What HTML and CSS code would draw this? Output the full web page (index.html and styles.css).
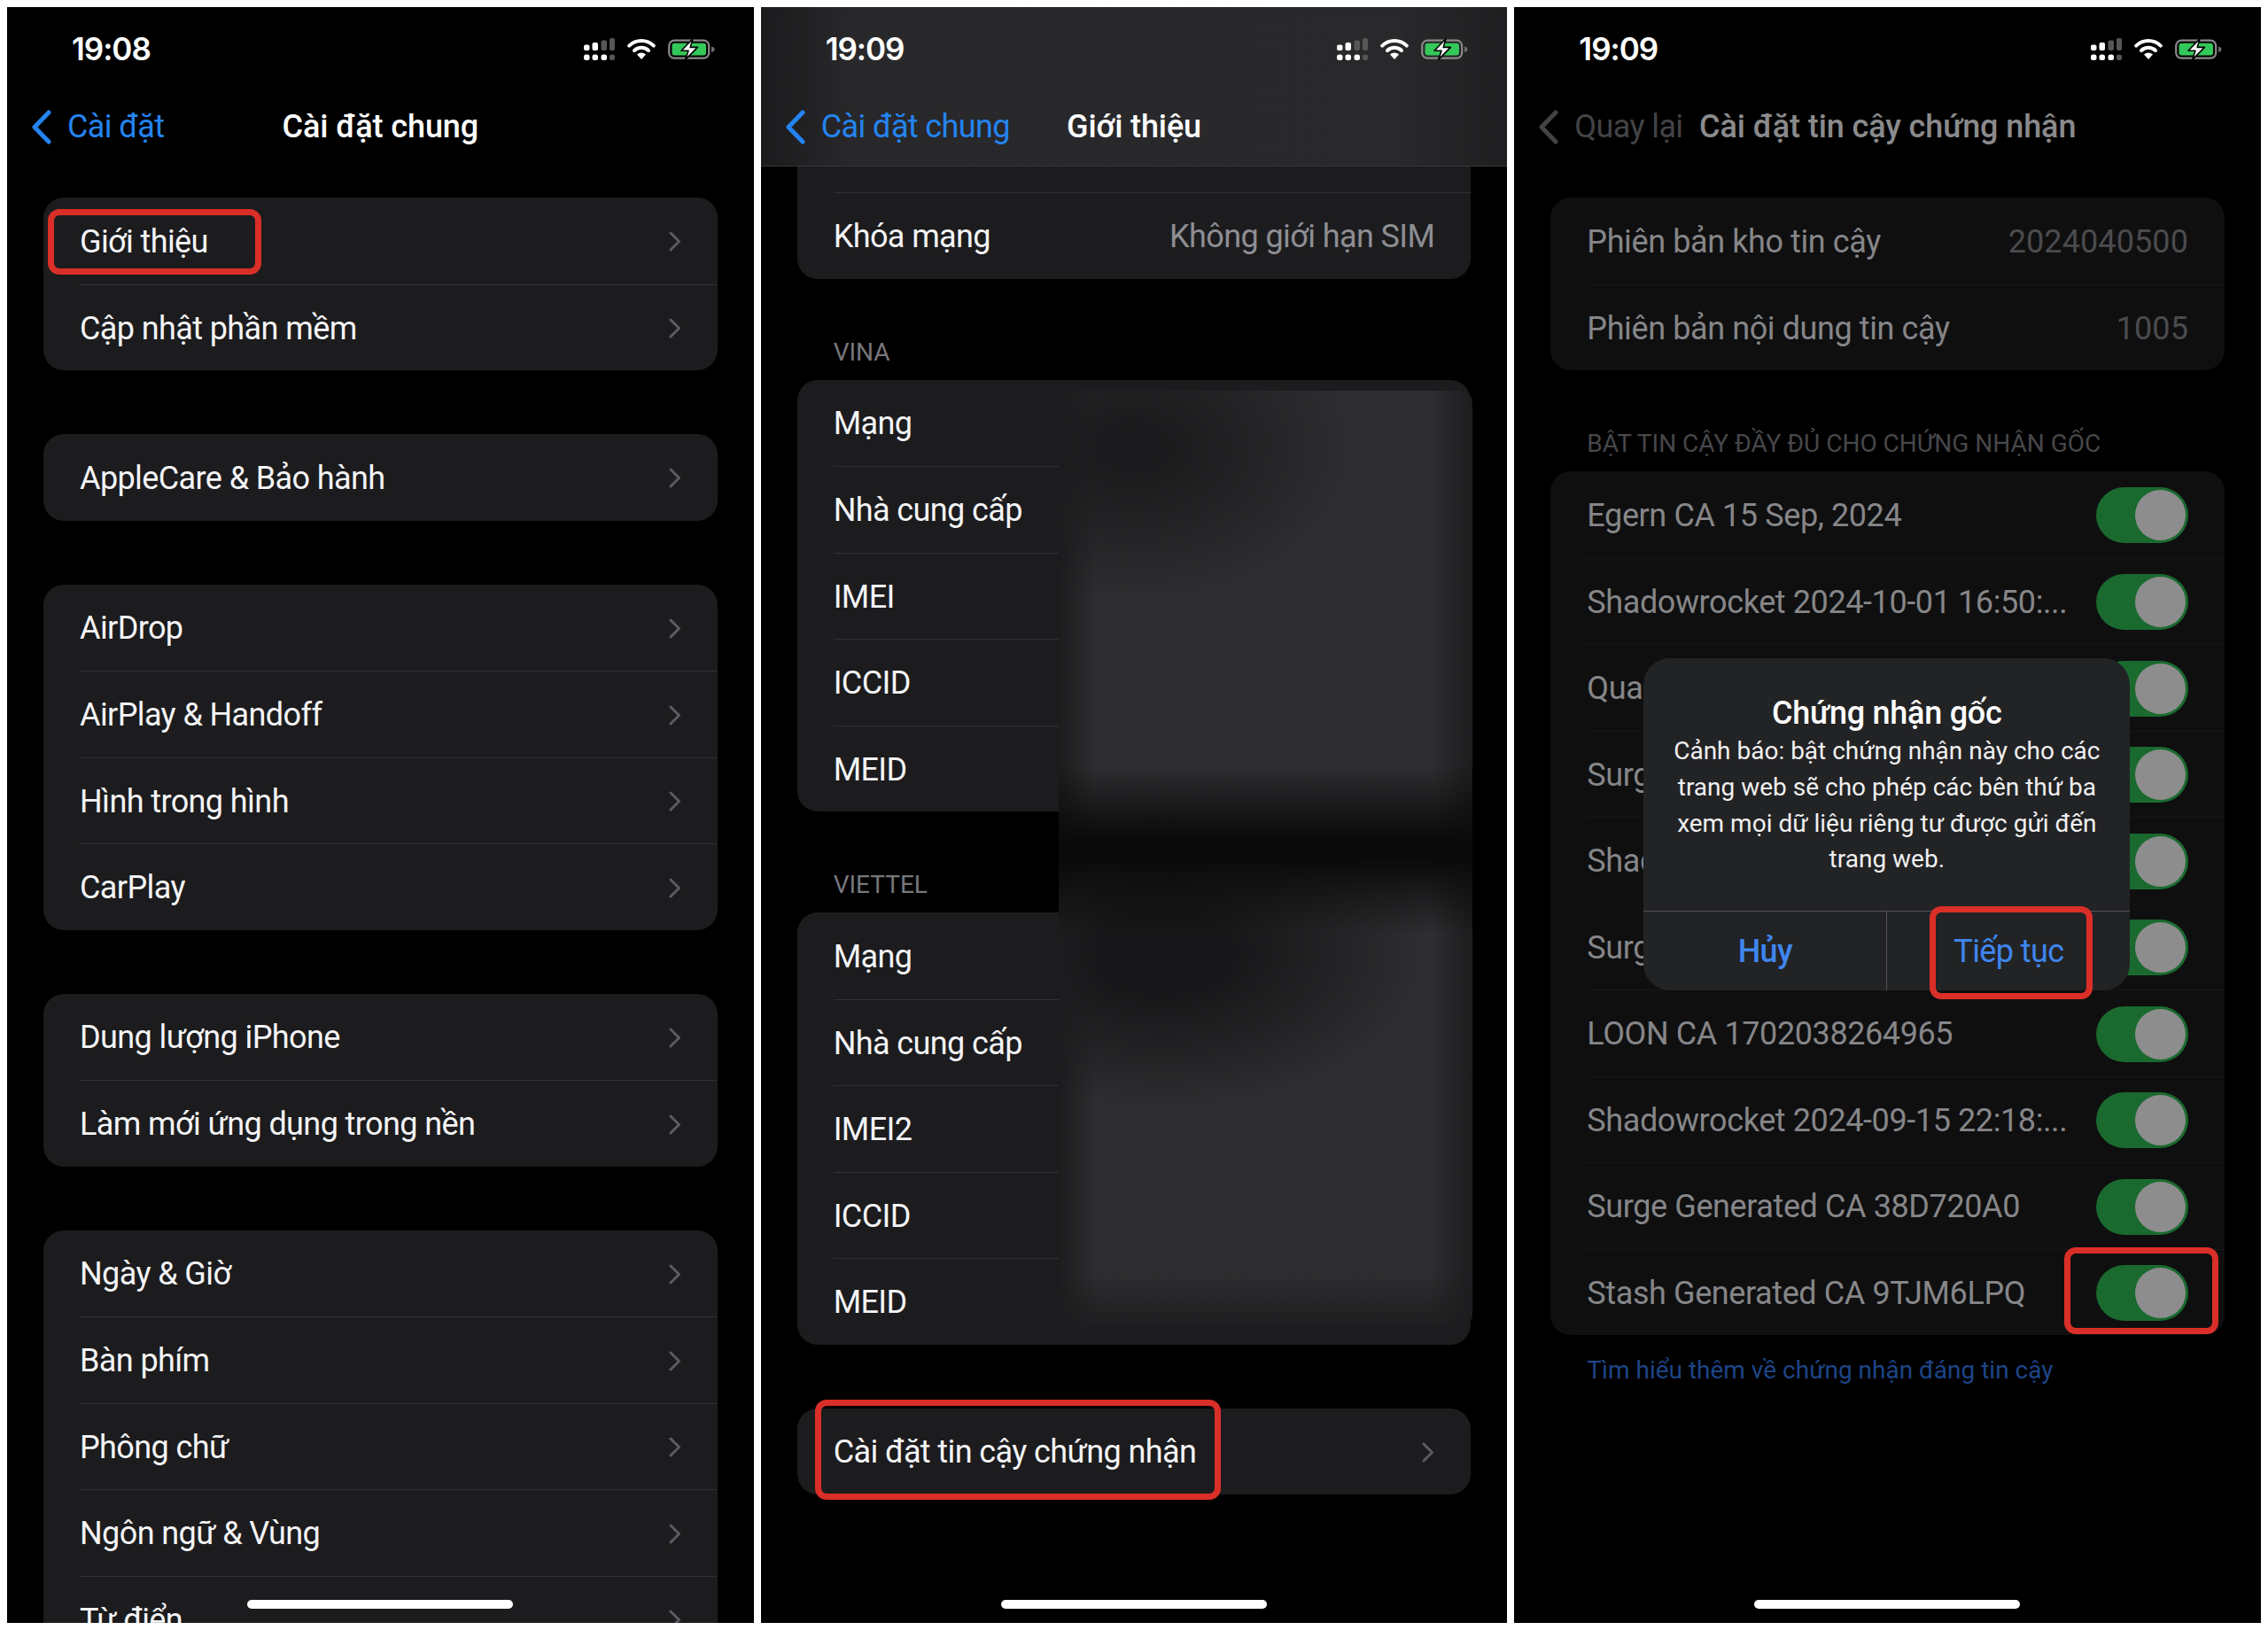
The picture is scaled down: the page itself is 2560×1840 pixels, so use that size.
FILE: index.html
```html
<!DOCTYPE html>
<html lang="vi">
<head>
    <meta charset="UTF-8">
    <title>Cài đặt tin cậy chứng nhận</title>
    <link rel="stylesheet" href="styles.css">
</head>
<body>
    <svg class="icon-defs" width="0" height="0">
        <symbol id="signal" viewBox="0 0 35 25">
            <rect x="0" y="7.5" width="6.5" height="6.5" rx="2" fill="#fff"/>
            <rect x="9.5" y="5" width="6.5" height="9" rx="2" fill="#fff"/>
            <rect x="19.5" y="2.5" width="6.5" height="11.5" rx="2" fill="#565656"/>
            <rect x="29" y="0" width="6" height="14" rx="2" fill="#565656"/>
            <rect x="0" y="18.5" width="6.5" height="6.5" rx="2.5" fill="#fff"/>
            <rect x="9.5" y="18.5" width="6.5" height="6.5" rx="2.5" fill="#fff"/>
            <rect x="19.5" y="18.5" width="6.5" height="6.5" rx="2.5" fill="#fff"/>
            <rect x="29" y="18.5" width="6" height="6.5" rx="2.5" fill="#565656"/>
        </symbol>
        <symbol id="wifi" viewBox="0 0 32 24">
            <path d="M2.2 8.6A20 20 0 0 1 29.8 8.6" fill="none" stroke="#fff" stroke-width="4" stroke-linecap="round"/>
            <path d="M8 14A11.6 11.6 0 0 1 24 14" fill="none" stroke="#fff" stroke-width="4" stroke-linecap="round"/>
            <path d="M16 24L11 18.6A7 7 0 0 1 21 18.6Z" fill="#fff"/>
        </symbol>
        <symbol id="battery" viewBox="0 0 53 25">
            <rect x="1.2" y="2.7" width="45" height="20" rx="6" fill="none" stroke="#8a8a8a" stroke-width="2.2"/>
            <rect x="4.5" y="5.8" width="38.5" height="13.8" rx="3" fill="#34c759"/>
            <path d="M49 9.5C51.5 10 52.5 11 52.5 12.7S51.5 15.4 49 16Z" fill="#6d6d6d"/>
            <path d="M28 0.8L15 14.2H23L19.6 24.4L33.4 10.4H25.2Z" fill="#fff" stroke="#000" stroke-width="1.6" stroke-linejoin="round"/>
        </symbol>
        <symbol id="chevron" viewBox="0 0 14 23">
            <path d="M2 2L11.5 11.5L2 21" fill="none" stroke="currentColor" stroke-width="3" stroke-linecap="round" stroke-linejoin="round"/>
        </symbol>
        <symbol id="back" viewBox="0 0 22 39">
            <path d="M19 3L3 19.5L19 36" fill="none" stroke="currentColor" stroke-width="5" stroke-linecap="round" stroke-linejoin="round"/>
        </symbol>
    </svg>

    <div class="phone">
        <div class="topbar">
            <div class="status">
                <span class="time">19:08</span>
                <div class="status-icons">
                    <svg class="ico-signal"><use href="#signal"/></svg>
                    <svg class="ico-wifi"><use href="#wifi"/></svg>
                    <svg class="ico-battery"><use href="#battery"/></svg>
                </div>
            </div>
            <div class="nav">
                <div class="back"><svg class="ico-back"><use href="#back"/></svg><span>Cài đặt</span></div>
                <div class="title">Cài đặt chung</div>
            </div>
        </div>
        <div class="content first-gap">
            <div class="group">
                <div class="row"><span>Giới thiệu</span><svg class="chev"><use href="#chevron"/></svg></div>
                <div class="row"><span>Cập nhật phần mềm</span><svg class="chev"><use href="#chevron"/></svg></div>
            </div>
            <div class="group">
                <div class="row"><span>AppleCare &amp; Bảo hành</span><svg class="chev"><use href="#chevron"/></svg></div>
            </div>
            <div class="group">
                <div class="row"><span>AirDrop</span><svg class="chev"><use href="#chevron"/></svg></div>
                <div class="row"><span>AirPlay &amp; Handoff</span><svg class="chev"><use href="#chevron"/></svg></div>
                <div class="row"><span>Hình trong hình</span><svg class="chev"><use href="#chevron"/></svg></div>
                <div class="row"><span>CarPlay</span><svg class="chev"><use href="#chevron"/></svg></div>
            </div>
            <div class="group">
                <div class="row"><span>Dung lượng iPhone</span><svg class="chev"><use href="#chevron"/></svg></div>
                <div class="row"><span>Làm mới ứng dụng trong nền</span><svg class="chev"><use href="#chevron"/></svg></div>
            </div>
            <div class="group">
                <div class="row"><span>Ngày &amp; Giờ</span><svg class="chev"><use href="#chevron"/></svg></div>
                <div class="row"><span>Bàn phím</span><svg class="chev"><use href="#chevron"/></svg></div>
                <div class="row"><span>Phông chữ</span><svg class="chev"><use href="#chevron"/></svg></div>
                <div class="row"><span>Ngôn ngữ &amp; Vùng</span><svg class="chev"><use href="#chevron"/></svg></div>
                <div class="row"><span>Từ điển</span><svg class="chev"><use href="#chevron"/></svg></div>
            </div>
        </div>
        <div class="mark mark-about"></div>
        <div class="home-bar"></div>
    </div>

    <div class="phone">
        <div class="topbar topbar-blur">
            <div class="status">
                <span class="time">19:09</span>
                <div class="status-icons">
                    <svg class="ico-signal"><use href="#signal"/></svg>
                    <svg class="ico-wifi"><use href="#wifi"/></svg>
                    <svg class="ico-battery"><use href="#battery"/></svg>
                </div>
            </div>
            <div class="nav">
                <div class="back"><svg class="ico-back"><use href="#back"/></svg><span>Cài đặt chung</span></div>
                <div class="title">Giới thiệu</div>
            </div>
        </div>
        <div class="content">
            <div class="group group-cut">
                <div class="row-stub"></div>
                <div class="row"><span>Khóa mạng</span><span class="value">Không giới hạn SIM</span></div>
            </div>
            <div class="section-label">VINA</div>
            <div class="group">
                <div class="row"><span>Mạng</span></div>
                <div class="row"><span>Nhà cung cấp</span></div>
                <div class="row"><span>IMEI</span></div>
                <div class="row"><span>ICCID</span></div>
                <div class="row"><span>MEID</span></div>
            </div>
            <div class="section-label">VIETTEL</div>
            <div class="group">
                <div class="row"><span>Mạng</span></div>
                <div class="row"><span>Nhà cung cấp</span></div>
                <div class="row"><span>IMEI2</span></div>
                <div class="row"><span>ICCID</span></div>
                <div class="row"><span>MEID</span></div>
            </div>
            <div class="group">
                <div class="row"><span>Cài đặt tin cậy chứng nhận</span><svg class="chev"><use href="#chevron"/></svg></div>
            </div>
        </div>
        <div class="blur-patch"></div>
        <div class="mark mark-trust"></div>
        <div class="home-bar"></div>
    </div>

    <div class="phone dimmed">
        <div class="topbar">
            <div class="status">
                <span class="time">19:09</span>
                <div class="status-icons">
                    <svg class="ico-signal"><use href="#signal"/></svg>
                    <svg class="ico-wifi"><use href="#wifi"/></svg>
                    <svg class="ico-battery"><use href="#battery"/></svg>
                </div>
            </div>
            <div class="nav">
                <div class="back"><svg class="ico-back"><use href="#back"/></svg><span>Quay lại</span></div>
                <div class="title">Cài đặt tin cậy chứng nhận</div>
            </div>
        </div>
        <div class="content first-gap">
            <div class="group">
                <div class="row"><span>Phiên bản kho tin cậy</span><span class="value">2024040500</span></div>
                <div class="row"><span>Phiên bản nội dung tin cậy</span><span class="value">1005</span></div>
            </div>
            <div class="section-label">BẬT TIN CẬY ĐẦY ĐỦ CHO CHỨNG NHẬN GỐC</div>
            <div class="group group-tight">
                <div class="row"><span>Egern CA 15 Sep, 2024</span><div class="toggle"></div></div>
                <div class="row"><span>Shadowrocket 2024-10-01 16:50:...</span><div class="toggle"></div></div>
                <div class="row"><span>Qua</span><div class="toggle"></div></div>
                <div class="row"><span>Surg</span><div class="toggle"></div></div>
                <div class="row"><span>Shad</span><div class="toggle"></div></div>
                <div class="row"><span>Surg</span><div class="toggle"></div></div>
                <div class="row"><span>LOON CA 1702038264965</span><div class="toggle"></div></div>
                <div class="row"><span>Shadowrocket 2024-09-15 22:18:...</span><div class="toggle"></div></div>
                <div class="row"><span>Surge Generated CA 38D720A0</span><div class="toggle"></div></div>
                <div class="row"><span>Stash Generated CA 9TJM6LPQ</span><div class="toggle"></div></div>
            </div>
            <div class="footnote">Tìm hiểu thêm về chứng nhận đáng tin cậy</div>
        </div>
        <div class="alert">
            <div class="alert-body">
                <div class="alert-title">Chứng nhận gốc</div>
                <div class="alert-text">Cảnh báo: bật chứng nhận này cho các<br>trang web sẽ cho phép các bên thứ ba<br>xem mọi dữ liệu riêng tư được gửi đến<br>trang web.</div>
            </div>
            <div class="alert-actions">
                <div class="alert-btn alert-btn-bold">Hủy</div>
                <div class="alert-btn">Tiếp tục</div>
            </div>
        </div>
        <div class="mark mark-continue"></div>
        <div class="mark mark-toggle"></div>
        <div class="home-bar"></div>
    </div>
</body>
</html>
```

FILE: styles.css
```css
* {
    box-sizing: border-box;
}

body {
    margin: 0;
    padding: 8px;
    width: 2560px;
    height: 1840px;
    background-color: #fff;
    display: flex;
    gap: 8px;
    font-family: Roboto, "Noto Sans", sans-serif;
    color: #f4f4f6;
    overflow: hidden;
}

.icon-defs {
    position: absolute;
}

.phone {
    position: relative;
    width: 843px;
    height: 1824px;
    background-color: #000;
    overflow: hidden;
    font-size: 36px;
    letter-spacing: -0.6px;
    white-space: nowrap;
}

/* status bar + nav */
.topbar {
    height: 180px;
}

.topbar-blur {
    background: linear-gradient(90deg, #1b1b1d 0, #28282b 12%, #29292c 85%, #1f1f21 100%);
    border-bottom: 1px solid #37373a;
}

.status {
    height: 92px;
    padding: 2px 44px 0 73px;
    display: flex;
    align-items: center;
    justify-content: space-between;
}

.time {
    font-family: Inter, sans-serif;
    font-weight: 600;
    font-size: 35px;
    letter-spacing: -1px;
    color: #fff;
}

.status-icons {
    display: flex;
    align-items: center;
    gap: 14px;
}

.ico-signal {
    width: 35px;
    height: 25px;
}

.ico-wifi {
    width: 32px;
    height: 24px;
}

.ico-battery {
    width: 53px;
    height: 25px;
}

.nav {
    height: 86px;
    padding: 0 28px;
    display: grid;
    grid-template-columns: 1fr auto 1fr;
    align-items: center;
}

.back {
    display: flex;
    align-items: center;
    gap: 18px;
    color: #2484f0;
}

.ico-back {
    width: 22px;
    height: 39px;
}

.title {
    font-weight: 500;
    letter-spacing: -0.1px;
    color: #fff;
}

/* lists */
.content {
    padding: 0 41px;
}

.first-gap {
    padding-top: 35px;
}

.group {
    background-color: #1c1c1e;
    border-radius: 23px;
    margin-bottom: 72px;
    overflow: hidden;
}

.group-cut {
    border-radius: 0 0 23px 23px;
}

.group-tight {
    margin-bottom: 23px;
}

.row-stub {
    height: 29px;
}

.row {
    height: 97.5px;
    margin-left: 41px;
    padding-right: 41px;
    padding-top: 2px;
    display: flex;
    align-items: center;
    justify-content: space-between;
}

.row + .row,
.row-stub + .row {
    border-top: 1.5px solid #313134;
}

.value {
    color: #8e8e93;
}

.chev {
    width: 14px;
    height: 23px;
    color: #5c5c60;
}

.section-label {
    height: 22px;
    line-height: 22px;
    margin: 0 0 20px 41px;
    font-size: 28px;
    letter-spacing: 0;
    color: #77777c;
}

/* blurred out values on the middle screen */
.blur-patch {
    position: absolute;
    left: 336px;
    top: 433px;
    width: 467px;
    height: 1057px;
    border-radius: 0 14px 14px 0;
    background:
        linear-gradient(180deg, rgba(10, 10, 11, 0) 40%, #0a0a0b 48%, #0a0a0b 50%, rgba(10, 10, 11, 0) 58%),
        linear-gradient(90deg, #1c1c1e 0, rgba(28, 28, 30, 0) 9%, rgba(28, 28, 30, 0) 90%, #1c1c1e 100%),
        radial-gradient(ellipse 55% 17% at 18% 6%, #1a1a1c 10%, rgba(26, 26, 28, 0) 100%),
        radial-gradient(ellipse 65% 17% at 25% 60%, #171719 25%, rgba(23, 23, 25, 0) 100%),
        linear-gradient(180deg, rgba(28, 28, 30, 0) 94%, #1e1e20 100%),
        #2e2e31;
}

/* red annotation boxes */
.mark {
    position: absolute;
    border: 7px solid #da2f28;
    border-radius: 13px;
}

.mark-about {
    left: 46px;
    top: 228px;
    width: 241px;
    height: 74px;
}

.mark-trust {
    left: 61px;
    top: 1572px;
    width: 458px;
    height: 113px;
}

.mark-continue {
    left: 469px;
    top: 1015px;
    width: 184px;
    height: 105px;
}

.mark-toggle {
    left: 621px;
    top: 1400px;
    width: 174px;
    height: 98px;
}

.home-bar {
    position: absolute;
    left: 271px;
    bottom: 16px;
    width: 300px;
    height: 10px;
    border-radius: 5px;
    background-color: #fff;
}

/* third screen sits behind the alert */
.dimmed .back {
    color: #434345;
}

.dimmed .title {
    color: #8a8a8c;
}

.dimmed .group {
    background-color: #0f0f10;
}

.dimmed .row {
    color: #868688;
    letter-spacing: -0.4px;
}

.dimmed .row + .row {
    border-top-color: #18181a;
}

.dimmed .value {
    color: #4b4b4e;
    letter-spacing: 0.1px;
}

.dimmed .section-label {
    color: #47474a;
}

.toggle {
    flex: none;
    position: relative;
    width: 104px;
    height: 63px;
    border-radius: 32px;
    background-color: #1a6a2f;
}

.toggle::after {
    content: "";
    position: absolute;
    right: 3px;
    top: 3px;
    width: 57px;
    height: 57px;
    border-radius: 50%;
    background-color: #8d8d8d;
}

.footnote {
    margin-left: 41px;
    font-size: 28px;
    letter-spacing: 0;
    color: #1d4587;
}

.alert {
    position: absolute;
    left: 146px;
    top: 735px;
    width: 549px;
    height: 375px;
    border-radius: 30px;
    background-color: #222325;
    display: flex;
    flex-direction: column;
}

.alert-body {
    height: 285px;
    padding-top: 39px;
    text-align: center;
}

.alert-title {
    font-weight: 500;
    letter-spacing: -0.25px;
    line-height: 46px;
    color: #fff;
}

.alert-text {
    font-size: 28px;
    letter-spacing: 0;
    line-height: 40.8px;
    color: #f0f0f0;
}

.alert-actions {
    flex: 1;
    display: flex;
    border-top: 1.5px solid #545456;
}

.alert-btn {
    flex: 1;
    display: flex;
    align-items: center;
    justify-content: center;
    color: #3f86ee;
}

.alert-btn-bold {
    font-weight: 500;
    border-right: 1.5px solid #545456;
}
```
